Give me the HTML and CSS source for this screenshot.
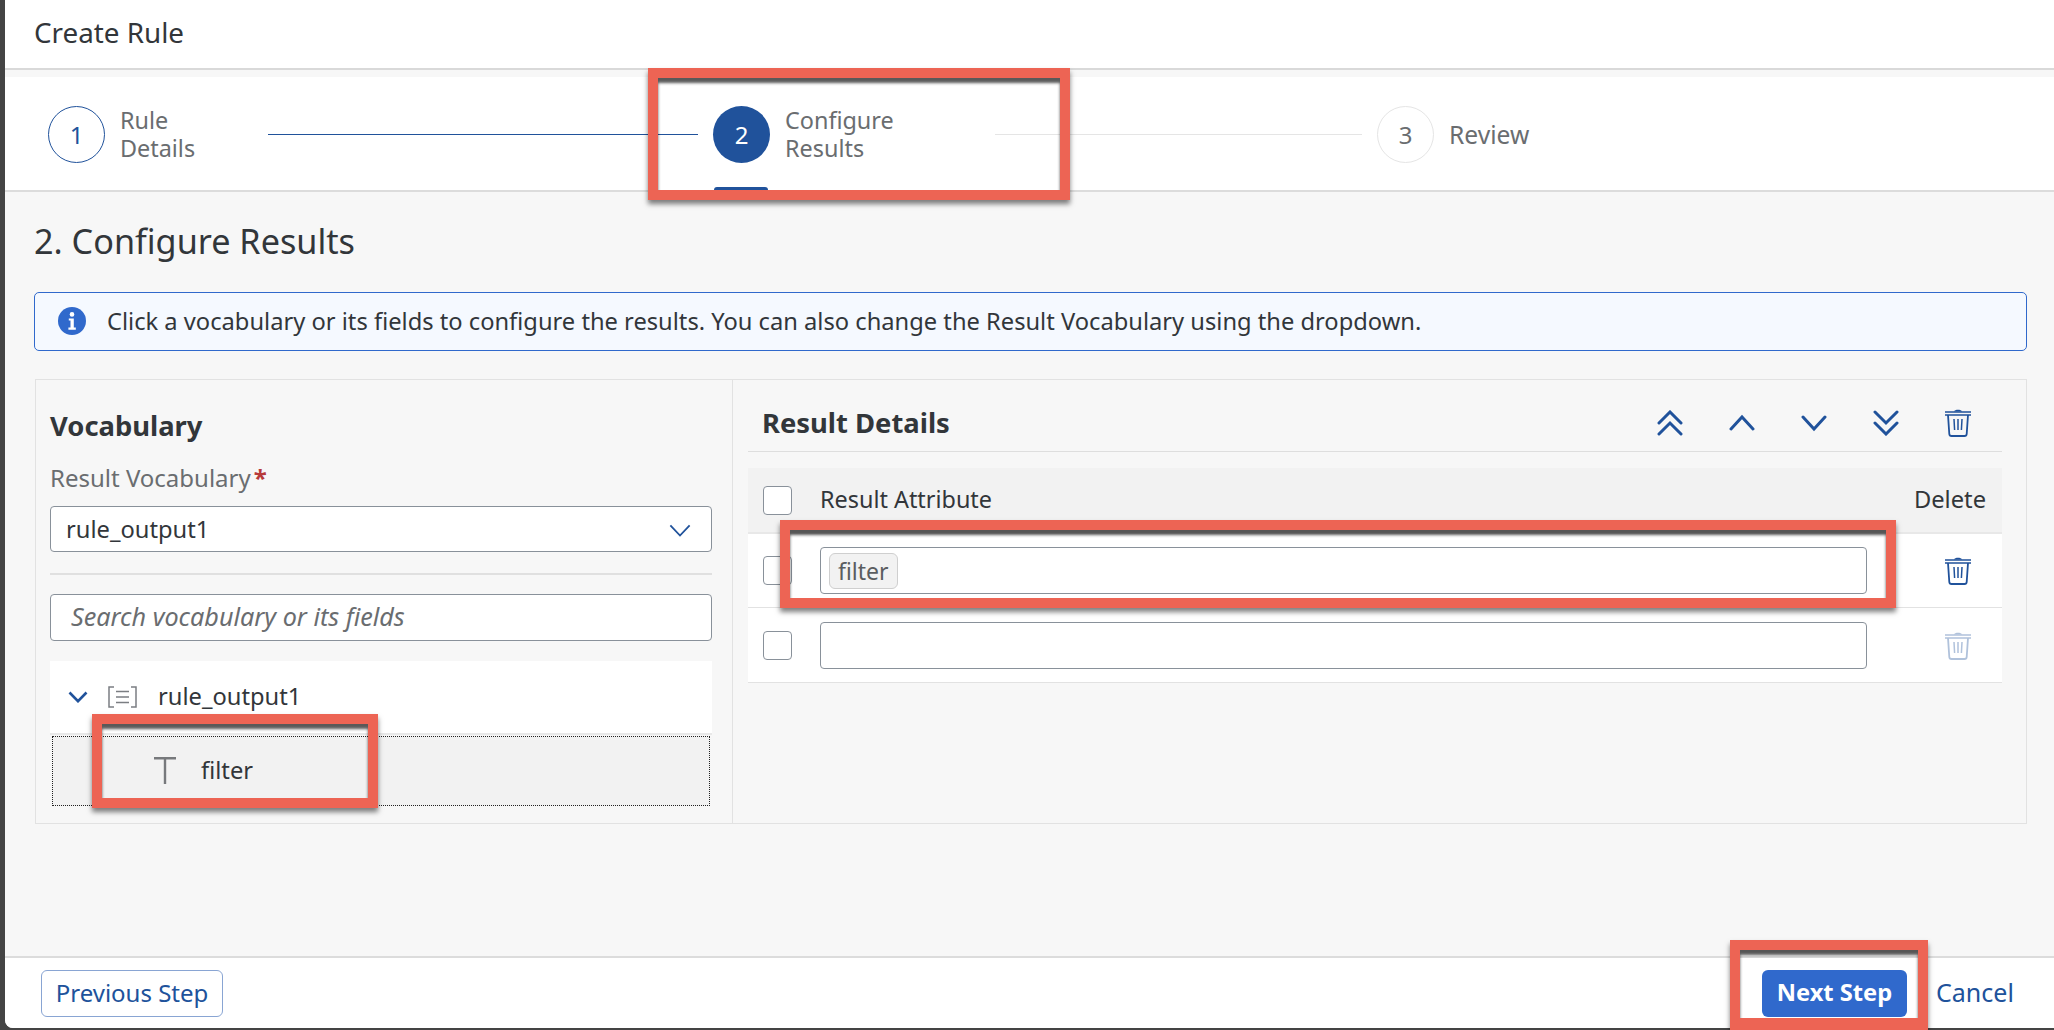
FILE: index.html
```html
<!DOCTYPE html>
<html lang="en">
<head>
<meta charset="utf-8">
<title>Create Rule</title>
<link rel="stylesheet" href="styles.css">
</head>
<body>
<div class="window">
  <header class="title-bar">Create Rule</header>
  <nav class="stepper">
    <div class="step step-one">
      <span class="circle circle-done">1</span>
      <span class="step-label">Rule<br>Details</span>
    </div>
    <span class="line line-done"></span>
    <div class="step step-two">
      <span class="circle circle-current">2</span>
      <span class="step-label">Configure<br>Results</span>
      <span class="step-tab"></span>
    </div>
    <span class="line line-todo"></span>
    <div class="step step-three">
      <span class="circle circle-todo">3</span>
      <span class="step-label step-review">Review</span>
    </div>
  </nav>
  <main class="content">
    <h2 class="page-title">2. Configure Results</h2>
    <div class="info-strip">
      <svg class="info-icon" viewBox="0 0 28 28"><circle cx="14" cy="14" r="14" fill="#3069cc"/><circle cx="14" cy="7.4" r="2.3" fill="#fff"/><path d="M10.8 11.4h5v9.2h2v2.2h-7.4v-2.2h2.1v-7h-1.7z" fill="#fff"/></svg>
      <span class="nudge">Click a vocabulary or its fields to configure the results. You can also change the Result Vocabulary using the dropdown.</span>
    </div>
    <section class="panel">
      <div class="vocab-pane">
        <h3 class="pane-title">Vocabulary</h3>
        <div class="field-label">Result Vocabulary<span class="required">*</span></div>
        <div class="input select">
          <span>rule_output1</span>
          <svg class="select-chevron" viewBox="0 0 24 14"><path d="M1.5 1.5 12 12.5 22.5 1.5" fill="none" stroke="#20529b" stroke-width="2"/></svg>
        </div>
        <hr class="divider">
        <div class="input search"><span class="nudge">Search vocabulary or its fields</span></div>
        <div class="tree-row">
          <svg class="tree-chevron" viewBox="0 0 20 12"><path d="M1.5 1.5 10 10.2 18.5 1.5" fill="none" stroke="#20529b" stroke-width="2.6"/></svg>
          <svg class="struct-icon" viewBox="0 0 29 22"><path d="M6 1H1v20h5M23 1h5v20h-5" fill="none" stroke="#7b7e82" stroke-width="1.5"/><path d="M8 5.5h13M8 11h13M8 16.500h13" fill="none" stroke="#7b7e82" stroke-width="1.500"/></svg>
          <span class="nudge">rule_output1</span>
        </div>
        <div class="tree-selected">
          <svg class="text-icon" viewBox="0 0 22 27"><path d="M0 1.200h22M11 1v26" fill="none" stroke="#77797c" stroke-width="2.400"/></svg>
          <span class="nudge">filter</span>
        </div>
      </div>
      <div class="result-pane">
        <div class="result-head">
          <h3 class="pane-title">Result Details</h3>
          <div class="toolbar">
            <svg class="tool-icon" viewBox="0 0 26 26"><path d="M2 13 13 2l11 11M2 24l11-11 11 11" fill="none" stroke="#20529b" stroke-width="3" stroke-linecap="round"/></svg>
            <svg class="tool-icon" viewBox="0 0 26 26"><path d="M2 19 13 7l11 12" fill="none" stroke="#20529b" stroke-width="3" stroke-linecap="round"/></svg>
            <svg class="tool-icon" viewBox="0 0 26 26"><path d="M2 7l11 12L24 7" fill="none" stroke="#20529b" stroke-width="3" stroke-linecap="round"/></svg>
            <svg class="tool-icon" viewBox="0 0 26 26"><path d="M2 2l11 11L24 2M2 13l11 11 11-11" fill="none" stroke="#20529b" stroke-width="3" stroke-linecap="round"/></svg>
            <svg class="trash" viewBox="0 0 26 29"><path d="M0 4h26M0 7h26" stroke="#20529b" stroke-width="1.6" fill="none"/><path d="M9 3.500c.5-2.500 7.500-2.500 8 0z" fill="#20529b"/><path d="M3 7l1.300 19c.1 1.400 1 2 2.200 2h13c1.200 0 2.100-.6 2.200-2L23 7" fill="none" stroke="#20529b" stroke-width="1.800"/><path d="M9 11l.6 11M13 11v11M17 11l-.6 11" stroke="#20529b" stroke-width="1.500" fill="none"/></svg>
          </div>
        </div>
        <div class="table-row table-header">
          <span class="checkbox"></span>
          <span class="attr-head nudge">Result Attribute</span>
          <span class="delete-head nudge">Delete</span>
        </div>
        <div class="table-row">
          <span class="checkbox"></span>
          <div class="input attr-input"><span class="token">filter</span></div>
          <span class="delete-cell">
            <svg class="trash" viewBox="0 0 26 29"><path d="M0 4h26M0 7h26" stroke="#20529b" stroke-width="1.6" fill="none"/><path d="M9 3.500c.5-2.500 7.500-2.500 8 0z" fill="#20529b"/><path d="M3 7l1.300 19c.1 1.400 1 2 2.200 2h13c1.200 0 2.100-.6 2.200-2L23 7" fill="none" stroke="#20529b" stroke-width="1.800"/><path d="M9 11l.6 11M13 11v11M17 11l-.6 11" stroke="#20529b" stroke-width="1.500" fill="none"/></svg>
          </span>
        </div>
        <div class="table-row">
          <span class="checkbox"></span>
          <div class="input attr-input"></div>
          <span class="delete-cell">
            <svg class="trash trash-disabled" viewBox="0 0 26 29"><path d="M0 4h26M0 7h26" stroke="#20529b" stroke-width="1.6" fill="none"/><path d="M9 3.500c.5-2.500 7.500-2.500 8 0z" fill="#20529b"/><path d="M3 7l1.300 19c.1 1.400 1 2 2.200 2h13c1.200 0 2.100-.6 2.200-2L23 7" fill="none" stroke="#20529b" stroke-width="1.800"/><path d="M9 11l.6 11M13 11v11M17 11l-.6 11" stroke="#20529b" stroke-width="1.500" fill="none"/></svg>
          </span>
        </div>
      </div>
    </section>
  </main>
  <footer class="footer">
    <button class="btn btn-outline"><span class="nudge">Previous Step</span></button>
    <div class="footer-right">
      <button class="btn btn-primary"><span class="nudge">Next Step</span></button>
      <button class="btn btn-text"><span class="nudge">Cancel</span></button>
    </div>
  </footer>
</div>
<div class="mark mark-step"></div>
<div class="mark mark-field"></div>
<div class="mark mark-row"></div>
<div class="mark mark-next"></div>
</body>
</html>
```
FILE: styles.css
```css
* { box-sizing: border-box; }
html, body { margin: 0; height: 1030px; overflow: hidden; }
body {
  background: #444;
  font-family: "Noto Sans", "Open Sans", sans-serif;
  font-size: 23.7px;
  color: #32363a;
  position: relative;
  padding: 0 0 2px 5px;
}
.nudge { display: block; padding-bottom: 2px; }
.window {
  height: 1028px;
  background: #f7f7f7;
  border-bottom-left-radius: 8px;
  overflow: hidden;
  display: flex;
  flex-direction: column;
}
.title-bar {
  height: 70px;
  flex: none;
  background: #fff;
  border-bottom: 2px solid #d9d9d9;
  padding-left: 29px;
  line-height: 64px;
  font-size: 27.800px;
}
.stepper {
  flex: none;
  height: 115px;
  margin-top: 7px;
  padding: 2px 0 0 43px;
  background: #fff;
  border-bottom: 2px solid #dcdcdc;
  display: flex;
  align-items: center;
}
.step { display: flex; align-items: center; gap: 15px; position: relative; flex: none; }
.step-one { width: 220px; }
.step-two { width: 282px; }
.step-label { color: #6a6d70; line-height: 28px; font-size: 23.4px; padding-bottom: 2px; }
.step-review { font-size: 24.600px; padding-bottom: 0; }
.circle {
  width: 57px;
  height: 57px;
  flex: none;
  border-radius: 50%;
  display: flex;
  align-items: center;
  justify-content: center;
  font-size: 24px;
}
.circle-done { border: 1.5px solid #20529b; color: #20529b; background: #fff; }
.circle-current { background: #20529b; color: #fff; }
.circle-todo { border: 1.5px solid #e5e5e5; color: #6a6d70; background: #fff; }
.line { height: 1px; flex: none; }
.line-done { width: 430px; background: #20529b; margin-right: 15px; }
.line-todo { width: 367px; background: #e5e5e5; margin-right: 15px; }
.step-tab {
  position: absolute;
  left: 1px;
  top: 81px;
  width: 54px;
  height: 4px;
  background: #20529b;
  border-radius: 3px 3px 0 0;
}
.content { flex: 1; padding: 0 27px 0 29px; }
.page-title {
  margin: 26px 0 0;
  height: 48px;
  line-height: 46px;
  font-size: 34.200px;
  font-weight: 400;
}
.info-strip {
  margin-top: 26px;
  height: 59px;
  background: #f5f9ff;
  border: 1.5px solid #3069cc;
  border-radius: 5px;
  display: flex;
  align-items: center;
  padding-left: 23px;
  gap: 21px;
}
.info-icon { width: 28px; height: 28px; flex: none; margin-top: -2px; }
.panel {
  margin-top: 28px;
  margin-left: 1px;
  height: 445px;
  border: 1.5px solid #e2e2e2;
  display: grid;
  grid-template-columns: 697px 1fr;
}
.vocab-pane { padding: 0 20px 0 14px; border-right: 1.5px solid #e2e2e2; }
.pane-title { margin: 0; font-size: 27.4px; font-weight: 700; line-height: 40px; }
.vocab-pane .pane-title { margin-top: 26px; }
.field-label { margin-top: 18px; line-height: 28px; color: #6a6d70; font-size: 24px; }
.required { color: #b73a3a; font-weight: 700; margin-left: 3px; }
.input {
  background: #fff;
  border: 1.5px solid #89919a;
  border-radius: 4px;
  display: flex;
  align-items: center;
}
.select { margin-top: 14px; height: 46px; padding: 0 20px 0 15px; justify-content: space-between; }
.select-chevron { width: 22px; height: 13px; margin-top: 3px; }
.divider { margin: 21px 0 0; border: 0; height: 1.5px; background: #e0e0e0; }
.search { margin-top: 19px; height: 47px; padding-left: 20px; font-style: italic; color: #6a6d70; font-size: 25.200px; }
.tree-row {
  margin-top: 20px;
  height: 74px;
  background: #fff;
  border-bottom: 2px solid #e8e8e8;
  display: flex;
  align-items: center;
  padding-left: 18px;
}
.tree-chevron { width: 20px; height: 12px; flex: none; margin-right: 20px; }
.struct-icon { width: 29px; height: 22px; flex: none; margin-right: 21px; }
.tree-selected {
  margin: 1px 2px 0;
  height: 70px;
  background: #f2f2f2;
  border: 1px dotted #222;
  display: flex;
  align-items: center;
  padding-left: 101px;
}
.text-icon { width: 22px; height: 27px; flex: none; margin-right: 25px; }
.result-pane { padding: 0 24px 0 15px; }
.result-head {
  height: 72px;
  border-bottom: 1.5px solid #dedede;
  display: flex;
  align-items: center;
  justify-content: space-between;
  padding: 14px 31px 0 14px;
}
.toolbar { display: flex; align-items: center; gap: 46px; }
.tool-icon { width: 26px; height: 26px; flex: none; }
.trash { width: 26px; height: 29px; flex: none; display: block; }
.trash-disabled { opacity: .35; }
.table-row {
  height: 74px;
  background: #fff;
  border-bottom: 1.5px solid #e2e2e2;
  display: flex;
  align-items: center;
  padding-left: 15px;
}
.table-row:last-child { height: 75px; }
.table-header {
  margin-top: 16px;
  height: 66px;
  background: #f2f2f2;
  border-bottom: 2px solid #e8e8e8;
}
.checkbox {
  width: 29px;
  height: 29px;
  flex: none;
  background: #fff;
  border: 1.5px solid #89919a;
  border-radius: 4px;
  margin-right: 28px;
}
.attr-head { flex: 1; font-size: 23.4px; }
.delete-head { margin-right: 16px; }
.attr-input { width: 1047px; height: 47px; padding-left: 8px; flex: none; }
.token {
  height: 36px;
  padding: 0 8px;
  background: #f2f2f2;
  border: 1.5px solid #cfcfcf;
  border-radius: 6px;
  color: #5a5d60;
  display: flex;
  align-items: center;
  font-size: 23px;
}
.delete-cell { margin-left: 78px; }
.footer {
  height: 72px;
  flex: none;
  background: #fff;
  border-top: 2px solid #dcdcdc;
  display: flex;
  align-items: center;
  justify-content: space-between;
  padding: 0 43px 0 36px;
}
.footer-right { display: flex; align-items: center; gap: 29px; }
.btn {
  height: 47px;
  font: inherit;
  border-radius: 6px;
  cursor: pointer;
}
.btn-outline { width: 182px; padding: 0; background: #fff; border: 1.5px solid #89a5d3; color: #20529b; font-size: 24px; }
.btn-primary { width: 145px; padding: 0; background: #3069cc; border: 0; color: #fff; font-weight: 700; }
.btn-text { width: 75px; padding: 0; background: none; border: 0; color: #20529b; font-size: 25px; }
.mark {
  position: absolute;
  border: 10px solid #ed6454;
  box-shadow: 0 4px 5px rgba(0,0,0,.5), inset 0 5px 3px rgba(0,0,0,.65);
  pointer-events: none;
}
.mark-step { left: 648px; top: 68px; width: 422px; height: 132px; }
.mark-field { left: 92px; top: 714px; width: 286px; height: 94px; }
.mark-row { left: 780px; top: 520px; width: 1116px; height: 88px; }
.mark-next { left: 1730px; top: 940px; width: 198px; height: 90px; border-bottom-width: 12px; }
```
